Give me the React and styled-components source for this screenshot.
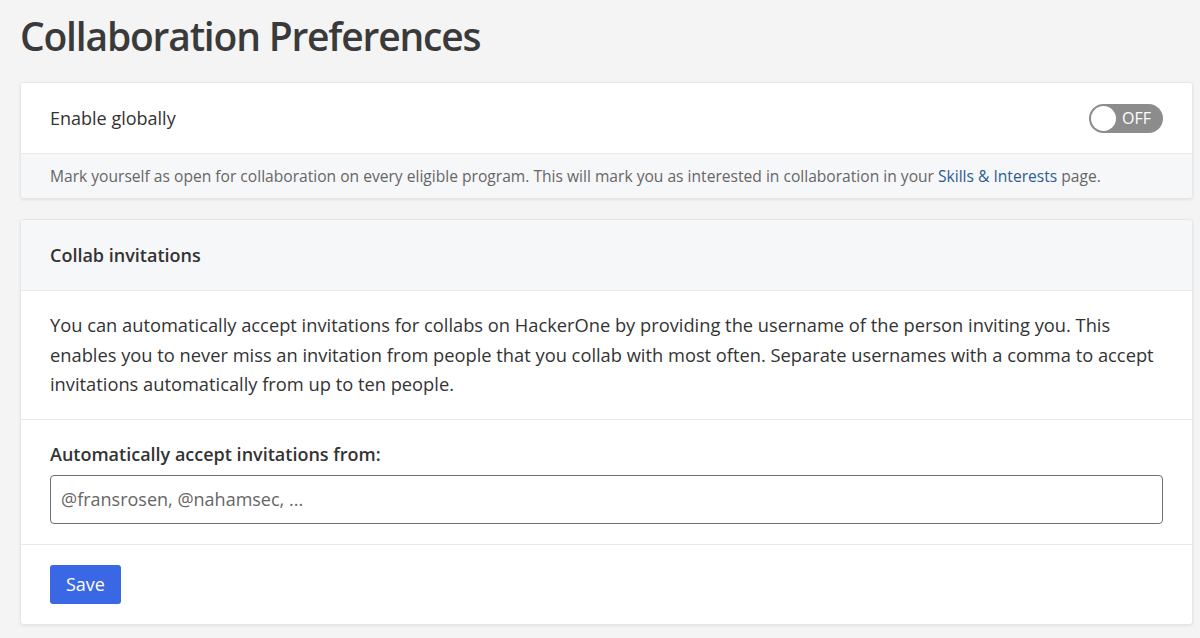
import React from "react";
import styled, { createGlobalStyle } from "styled-components";

const GlobalStyle = createGlobalStyle`
    * {
        box-sizing: border-box;
    }
    body {
        margin: 0;
        background: #f4f4f4;
        font-family: "Open Sans", "Noto Sans", sans-serif;
        color: #333;
    }
`;

const Page = styled.div`
    padding: 12px 7px 0 20px;
    display: flex;
    flex-direction: column;
`;

const Title = styled.h1`
    margin: 0 0 22px;
    font-size: 39px;
    line-height: 48px;
    font-weight: 600;
    letter-spacing: -1.2px;
    color: #3a3a3a;
`;

const Card = styled.section`
    background: #fff;
    border: 1px solid #e6e6e6;
    border-radius: 4px;
    box-shadow: 0 1px 3px rgba(0, 0, 0, 0.08);
    margin-bottom: 20px;
    overflow: hidden;
`;

const Row = styled.div`
    display: flex;
    align-items: center;
    justify-content: space-between;
    padding: 0 29px;
    height: ${({ h }) => h || 70}px;
    background: ${({ muted }) => (muted ? "#f6f7f9" : "#fff")};
    border-top: ${({ first }) => (first ? "none" : "1px solid #e8e8e8")};
`;

const Block = styled.div`
    padding: ${({ pad }) => pad || "20px 29px"};
    background: ${({ muted }) => (muted ? "#f6f7f9" : "#fff")};
    border-top: ${({ first }) => (first ? "none" : "1px solid #e8e8e8")};
`;

const RowLabel = styled.span`
    font-size: 18px;
    color: #333;
    font-weight: ${({ bold }) => (bold ? 600 : 400)};
`;

const Hint = styled.p`
    margin: 0;
    font-size: 15.6px;
    line-height: 22px;
    color: #666;
`;

const Link = styled.a`
    color: #2d5c94;
    text-decoration: none;
`;

const Toggle = styled.button`
    position: relative;
    width: 74px;
    height: 29px;
    border-radius: 15px;
    border: none;
    background: #8c8c8c;
    color: #fff;
    font-family: inherit;
    font-size: 16px;
    padding: 0 12px 0 0;
    display: flex;
    align-items: center;
    justify-content: flex-end;
    cursor: pointer;
`;

const Knob = styled.span`
    position: absolute;
    left: 2px;
    top: 2px;
    width: 25px;
    height: 25px;
    border-radius: 50%;
    background: #fff;
`;

const Body = styled.p`
    margin: 0;
    font-size: 18.3px;
    line-height: 29.5px;
    color: #333;
`;

const FieldLabel = styled.label`
    display: block;
    font-size: 18px;
    font-weight: 600;
    color: #333;
    margin-bottom: 9px;
`;

const Input = styled.input`
    display: block;
    width: 100%;
    height: 49px;
    border: 1px solid #6f6f6f;
    border-radius: 4px;
    padding: 0 10px;
    font-family: inherit;
    font-size: 18px;
    color: #333;
    background: #fff;
    &::placeholder {
        color: #666;
    }
`;

const SaveButton = styled.button`
    height: 39px;
    padding: 0 16px;
    border: none;
    border-radius: 3px;
    background: #3a67e4;
    color: #fff;
    font-family: inherit;
    font-size: 18px;
    cursor: pointer;
`;

export default function App() {
    return (
        <>
            <GlobalStyle />
            <Page>
                <Title>Collaboration Preferences</Title>
                <Card>
                    <Row first>
                        <RowLabel>Enable globally</RowLabel>
                        <Toggle>
                            <Knob />
                            OFF
                        </Toggle>
                    </Row>
                    <Block muted pad="11px 29px 11px">
                        <Hint>
                            Mark yourself as open for collaboration on every eligible program. This will mark you as interested in collaboration in your <Link href="#">Skills &amp; Interests</Link> page.
                        </Hint>
                    </Block>
                </Card>
                <Card>
                    <Row first muted h={70}>
                        <RowLabel bold>Collab invitations</RowLabel>
                    </Row>
                    <Block pad="19px 29px 20px">
                        <Body>
                            You can automatically accept invitations for collabs on HackerOne by providing the username of the person inviting you. This enables you to never miss an invitation from people that you collab with most often. Separate usernames with a comma to accept invitations automatically from up to ten people.
                        </Body>
                    </Block>
                    <Block pad="22px 29px 20px">
                        <FieldLabel>Automatically accept invitations from:</FieldLabel>
                        <Input placeholder="@fransrosen, @nahamsec, ..." />
                    </Block>
                    <Block pad="20px 29px 20px">
                        <SaveButton>Save</SaveButton>
                    </Block>
                </Card>
            </Page>
        </>
    );
}
